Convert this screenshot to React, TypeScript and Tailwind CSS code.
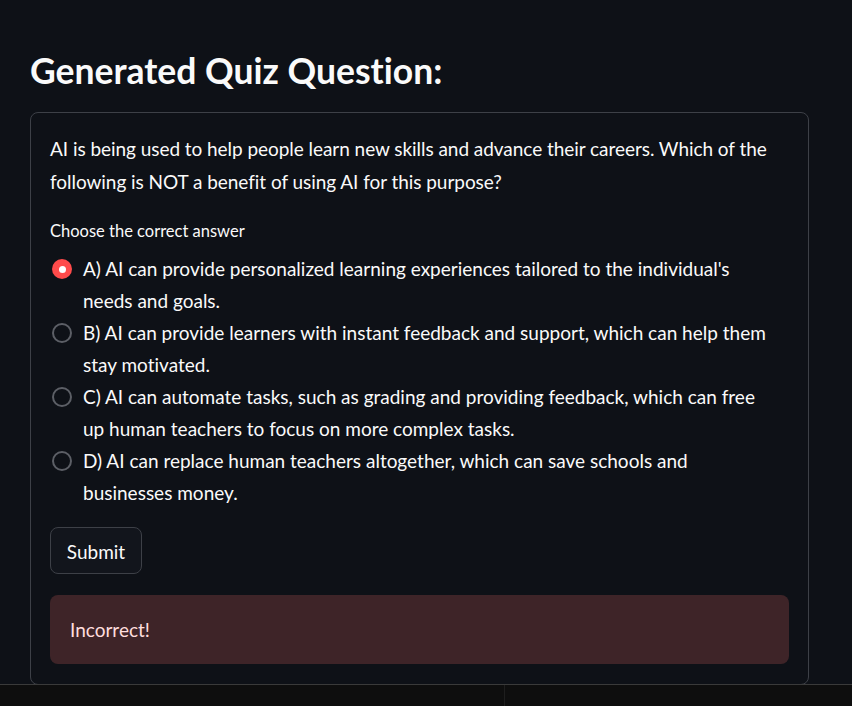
import React from "react";

const options = [
  "A) AI can provide personalized learning experiences tailored to the individual's needs and goals.",
  "B) AI can provide learners with instant feedback and support, which can help them stay motivated.",
  "C) AI can automate tasks, such as grading and providing feedback, which can free up human teachers to focus on more complex tasks.",
  "D) AI can replace human teachers altogether, which can save schools and businesses money.",
];

function Radio({ checked }: { checked: boolean }) {
  if (checked) {
    return (
      <span className="mt-[6px] flex h-[20px] w-[20px] shrink-0 items-center justify-center rounded-full bg-[#ff4b4b]">
        <span className="h-[7px] w-[7px] rounded-full bg-white" />
      </span>
    );
  }
  return (
    <span className="mt-[6px] h-[20px] w-[20px] shrink-0 rounded-full border-2 border-[#5c5f66]" />
  );
}

export default function App() {
  return (
    <div
      className="flex h-[706px] w-[852px] flex-col overflow-hidden bg-[#0e1117] text-[#fafafa] [font-variant-ligatures:none]"
      style={{ fontFamily: "Lato, 'Liberation Sans', sans-serif" }}
    >
      <div className="h-[684px] shrink-0 overflow-hidden px-[30px] pt-[50px]">
        <h3 className="text-[35.5px] font-bold leading-[42px]">Generated Quiz Question:</h3>
        <div className="mt-[20px] w-[779px] rounded-[8px] border border-[#3d4047] px-[19px] pb-[20px] pt-[20px]">
          <p className="text-[19px] leading-[32.5px] tracking-[-0.05px]">
            AI is being used to help people learn new skills and advance their careers. Which of the following is NOT a benefit of using AI for this purpose?
          </p>
          <div className="mt-[19px] text-[16.5px] leading-[28px]">Choose the correct answer</div>
          <div className="mt-[8px] flex flex-col">
            {options.map((o, i) => (
              <div key={i} className="flex items-start pl-[2px]">
                <Radio checked={i === 0} />
                <span className="ml-[11px] max-w-[688px] text-[19px] leading-[32px]">{o}</span>
              </div>
            ))}
          </div>
          <button className="mt-[18px] flex h-[47px] w-[92px] items-center justify-center rounded-[8px] border border-[#3d4047] bg-[#12151c] pt-[3px] text-[19px] text-[#fafafa]">
            Submit
          </button>
          <div className="mt-[21px] flex h-[69px] items-center rounded-[8px] bg-[#3e2428] px-[20px] pt-[2px] text-[19px] text-[#ffdede]">
            Incorrect!
          </div>
        </div>
      </div>
      <div className="flex h-[22px] shrink-0 border-t border-[#3a3a3a] bg-[#0e0e0e]">
        <div className="w-[505px] border-r border-[#1e1e1e]" />
        <div className="flex-1" />
      </div>
    </div>
  );
}
